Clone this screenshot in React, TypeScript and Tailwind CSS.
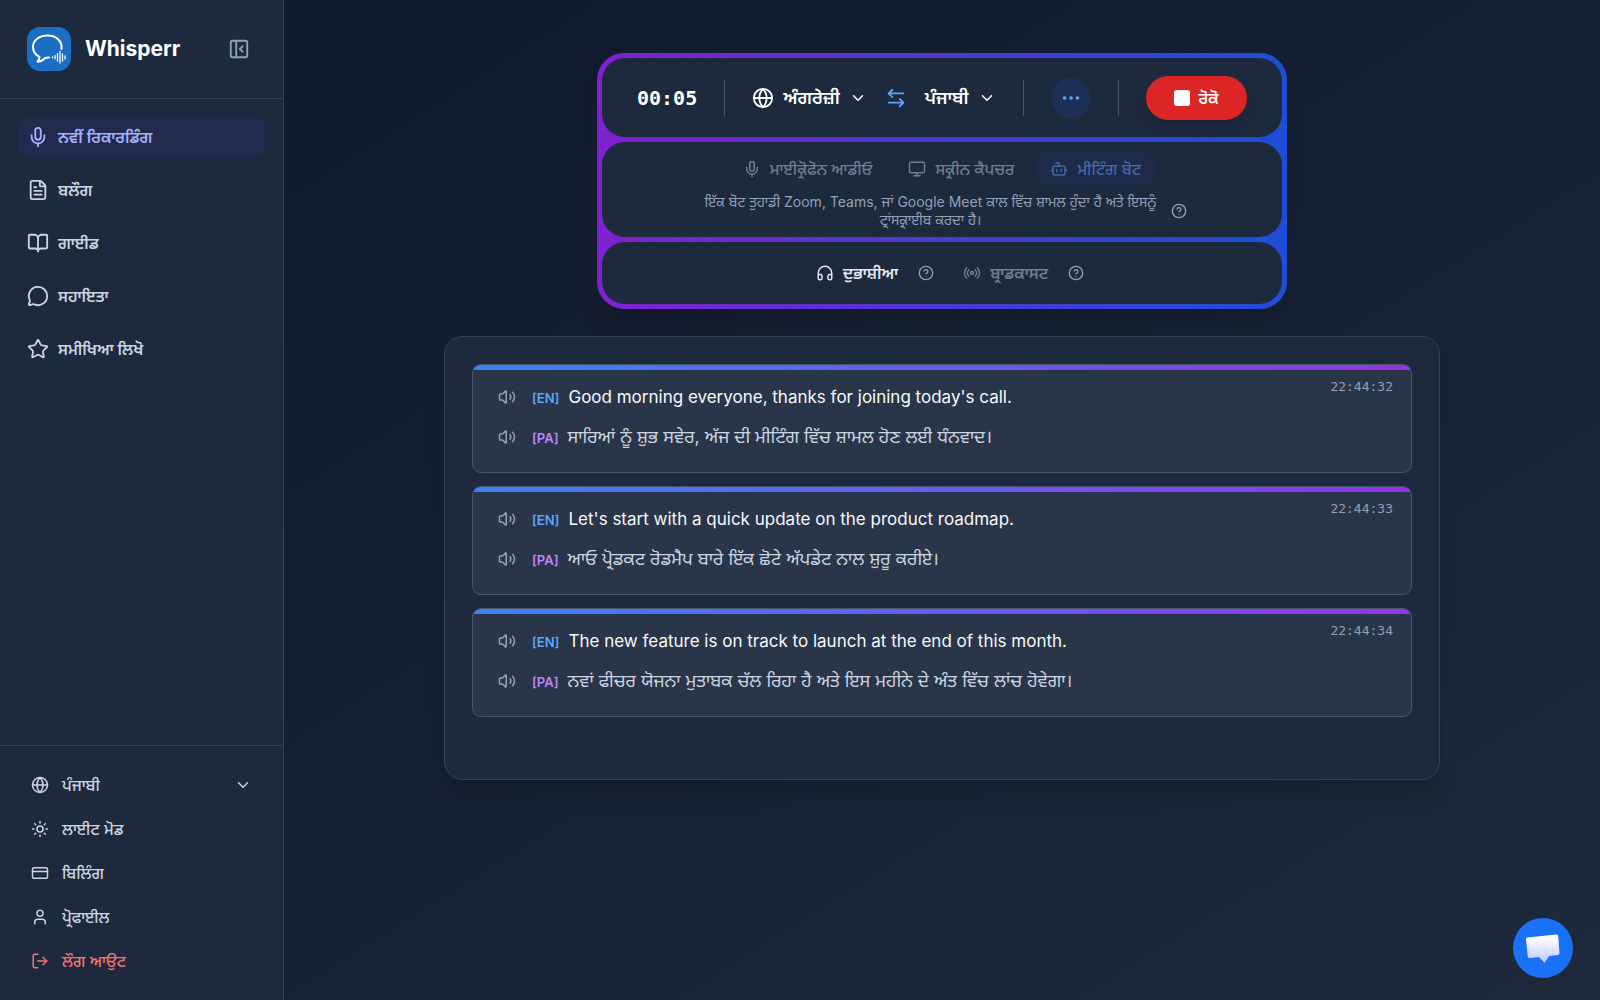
import React from "react";
import {
  Mic, FileText, BookOpen, MessageCircle, Star, Globe, Sun, CreditCard, User, LogOut,
  ChevronDown, PanelLeftClose, Monitor, Bot, CircleHelp, Headphones, Radio, Volume2,
  Ellipsis, ArrowLeftRight,
} from "lucide-react";

const nav = [
  { icon: Mic, label: "ਨਵੀਂ ਰਿਕਾਰਡਿੰਗ", active: true },
  { icon: FileText, label: "ਬਲੌਗ" },
  { icon: BookOpen, label: "ਗਾਈਡ" },
  { icon: MessageCircle, label: "ਸਹਾਇਤਾ" },
  { icon: Star, label: "ਸਮੀਖਿਆ ਲਿਖੋ" },
];

const messages = [
  { time: "22:44:32", en: "Good morning everyone, thanks for joining today's call.", pa: "ਸਾਰਿਆਂ ਨੂੰ ਸ਼ੁਭ ਸਵੇਰ, ਅੱਜ ਦੀ ਮੀਟਿੰਗ ਵਿੱਚ ਸ਼ਾਮਲ ਹੋਣ ਲਈ ਧੰਨਵਾਦ।" },
  { time: "22:44:33", en: "Let's start with a quick update on the product roadmap.", pa: "ਆਓ ਪ੍ਰੋਡਕਟ ਰੋਡਮੈਪ ਬਾਰੇ ਇੱਕ ਛੋਟੇ ਅੱਪਡੇਟ ਨਾਲ ਸ਼ੁਰੂ ਕਰੀਏ।" },
  { time: "22:44:34", en: "The new feature is on track to launch at the end of this month.", pa: "ਨਵਾਂ ਫੀਚਰ ਯੋਜਨਾ ਮੁਤਾਬਕ ਚੱਲ ਰਿਹਾ ਹੈ ਅਤੇ ਇਸ ਮਹੀਨੇ ਦੇ ਅੰਤ ਵਿੱਚ ਲਾਂਚ ਹੋਵੇਗਾ।" },
];

function Logo() {
  return (
    <svg viewBox="0 0 44 44" className="size-11" fill="none" stroke="white" strokeLinecap="round" aria-hidden="true">
      <rect width="44" height="44" rx="13" fill="#1a6fc4" stroke="none" />
      <path d="M34.500 22C35.500 14 29 8.500 20.500 8.500 12 8.500 6 13.500 6 20c0 4.500 2.500 8 6.500 9.800-.2 2-1 3.700-2 5 3-.3 5.500-1.500 7.500-3.600 1.200-.7 2.500-.7 4-.7" strokeWidth="2" strokeLinejoin="round" />
      <path d="M25.500 29.800v1M28 28.500v3.500M30.500 26.500v7.500M33 24.500v11.500M35.500 27v7M38 29v3" strokeWidth="1.300" />
    </svg>
  );
}

function Sidebar() {
  return (
    <aside className="flex w-[284px] shrink-0 flex-col border-r border-slate-700 bg-slate-800">
      <div className="flex items-center gap-[14px] border-b border-slate-700 px-[27px] py-[27px]">
        <Logo />
        <span className="text-[21px] leading-7 font-bold text-white">Whisperr</span>
        <button type="button" aria-label="Collapse sidebar" className="ml-auto p-[6px] text-slate-400">
          <PanelLeftClose size={22} />
        </button>
      </div>
      <nav className="flex flex-col gap-[13px] px-[18px] pt-[18px]">
        {nav.map(({ icon: Icon, label, active }) => (
          <a
            key={label}
            href="#"
            className={
              active
                ? "flex h-10 items-center gap-[9px] rounded-[9px] bg-[#232a4e] px-[9px] text-base font-semibold text-indigo-300"
                : "flex h-10 items-center gap-[9px] rounded-[9px] px-[9px] text-base font-semibold text-slate-300"
            }
          >
            <Icon size={22} />
            {label}
          </a>
        ))}
      </nav>
      <div className="mt-auto flex flex-col gap-2 border-t border-slate-700 px-[18px] pt-[21px] pb-[21px] text-base font-medium text-slate-300">
        <button type="button" className="flex h-9 items-center gap-[13px] px-[13px]">
          <Globe size={18} />
          ਪੰਜਾਬੀ
          <ChevronDown size={18} className="ml-auto" />
        </button>
        <button type="button" className="flex h-9 items-center gap-[13px] px-[13px]"><Sun size={18} />ਲਾਈਟ ਮੋਡ</button>
        <a href="#" className="flex h-9 items-center gap-[13px] px-[13px]"><CreditCard size={18} />ਬਿਲਿੰਗ</a>
        <a href="#" className="flex h-9 items-center gap-[13px] px-[13px]"><User size={18} />ਪ੍ਰੋਫਾਈਲ</a>
        <button type="button" className="flex h-9 items-center gap-[13px] px-[13px] text-[#f87171]"><LogOut size={18} />ਲੌਗ ਆਉਟ</button>
      </div>
    </aside>
  );
}

function Help() {
  return (
    <button type="button" aria-label="Help" className="text-slate-400">
      <CircleHelp size={16} />
    </button>
  );
}

function Toolbar() {
  return (
    <section className="flex w-full max-w-[690px] flex-col gap-[5px] rounded-[27px] bg-[linear-gradient(to_right,#7e22ce,#1d4ed8)] p-[5px] shadow-xl">
      <div className="flex h-[79px] items-center rounded-[23px] bg-slate-800 px-[35px]">
        <span className="font-['DejaVu_Sans_Mono',monospace] text-[20px] font-bold text-white">00:05</span>
        <div className="ml-[27px] h-9 w-px bg-slate-600" />
        <button type="button" className="ml-[27px] flex items-center gap-[9px] text-lg font-semibold text-white">
          <Globe size={22} />ਅੰਗਰੇਜ਼ੀ<ChevronDown size={18} />
        </button>
        <button type="button" aria-label="Swap languages" className="ml-[18px] text-[#60a5fa]"><ArrowLeftRight size={22} /></button>
        <button type="button" className="ml-[18px] flex items-center gap-[9px] text-lg font-semibold text-white">
          ਪੰਜਾਬੀ<ChevronDown size={18} />
        </button>
        <div className="ml-[27px] h-9 w-px bg-slate-600" />
        <button type="button" aria-label="More" className="ml-[27px] flex size-10 items-center justify-center rounded-full bg-[#1e2f57] text-[#60a5fa]"><Ellipsis size={22} /></button>
        <div className="ml-[27px] h-9 w-px bg-slate-600" />
        <button type="button" className="ml-[27px] flex h-[44px] items-center gap-[9px] rounded-full bg-[#dc2626] px-7 text-base font-semibold text-white shadow-lg">
          <span className="size-4 rounded-[3px] bg-white" />ਰੋਕੋ
        </button>
      </div>
      <div className="flex h-[95px] flex-col items-center rounded-[23px] bg-slate-800 pt-[9px]">
        <div className="flex h-9 items-center gap-1 text-base font-medium text-[#717c8e]">
          <button type="button" className="flex items-center gap-[9px] px-4"><Mic size={18} />ਮਾਈਕ੍ਰੋਫੋਨ ਆਡੀਓ</button>
          <button type="button" className="flex items-center gap-[9px] px-4"><Monitor size={18} />ਸਕ੍ਰੀਨ ਕੈਪਚਰ</button>
          <button type="button" className="flex h-9 items-center gap-[9px] rounded-full bg-[#1e2b48] px-4 text-[#4467a8]"><Bot size={18} />ਮੀਟਿੰਗ ਬੋਟ</button>
        </div>
        <div className="flex items-center gap-[7px] pt-[6px]">
          <p className="w-[466px] text-center text-sm leading-[18px] text-slate-400">
            ਇੱਕ ਬੋਟ ਤੁਹਾਡੀ Zoom, Teams, ਜਾਂ Google Meet ਕਾਲ ਵਿੱਚ ਸ਼ਾਮਲ ਹੁੰਦਾ ਹੈ ਅਤੇ ਇਸਨੂੰ ਟ੍ਰਾਂਸਕ੍ਰਾਈਬ ਕਰਦਾ ਹੈ।
          </p>
          <Help />
        </div>
      </div>
      <div className="flex h-[62px] items-center justify-center gap-[20px] rounded-[23px] bg-slate-800 text-base font-semibold">
        <button type="button" className="flex items-center gap-[9px] pl-4 text-slate-200"><Headphones size={18} />ਦੁਭਾਸ਼ੀਆ</button>
        <Help />
        <button type="button" className="ml-[9px] flex items-center gap-[9px] text-[#717c8e]"><Radio size={18} />ਬ੍ਰਾਡਕਾਸਟ</button>
        <Help />
      </div>
    </section>
  );
}

function Message({ time, en, pa }: { time: string; en: string; pa: string }) {
  return (
    <article className="relative overflow-hidden rounded-[9px] border border-slate-600 bg-[#293548]">
      <div className="h-[5px] bg-[linear-gradient(to_right,#3b82f6,#9333ea)]" />
      <time className="absolute top-[13px] right-[18px] font-['DejaVu_Sans_Mono',monospace] text-[13px] leading-[18px] text-slate-400">{time}</time>
      <div className="flex flex-col gap-3 px-[25px] pt-[13px] pb-[21px]">
        <div className="flex h-7 items-center gap-4">
          <button type="button" aria-label="Play English" className="text-slate-400"><Volume2 size={18} /></button>
          <p className="flex items-baseline gap-[9px] text-[17px] leading-7 text-slate-50">
            <span className="text-[13px] font-semibold text-[#60a5fa]">[EN]</span>
            <span>{en}</span>
          </p>
        </div>
        <div className="flex h-7 items-center gap-4">
          <button type="button" aria-label="Play Punjabi" className="text-slate-400"><Volume2 size={18} /></button>
          <p className="flex items-baseline gap-[9px] text-lg leading-7 text-slate-300">
            <span className="text-[13px] font-semibold text-[#c084fc]">[PA]</span>
            <span>{pa}</span>
          </p>
        </div>
      </div>
    </article>
  );
}

export default function App() {
  return (
    <div lang="pa" className="flex min-h-screen bg-[linear-gradient(to_bottom_right,#0f172a,#1e293b)] font-['Inter','Noto_Sans_Gurmukhi','Lohit_Gurmukhi',sans-serif]">
      <Sidebar />
      <main className="flex min-w-0 flex-1 flex-col items-center gap-[27px] px-9 pt-[53px]">
        <Toolbar />
        <section className="flex w-full max-w-[996px] flex-col gap-[13px] rounded-[18px] border border-slate-700 bg-slate-800 px-[27px] pt-[27px] pb-[62px] shadow-xl">
          {messages.map((m) => <Message key={m.time} {...m} />)}
        </section>
      </main>
      <button type="button" aria-label="Open chat" className="fixed right-[27px] bottom-[22px] flex size-[60px] items-center justify-center rounded-full bg-[#1972f5]">
        <svg viewBox="0 0 60 60" className="size-[60px]" aria-hidden="true">
          <defs>
            <linearGradient id="bubble" x1="0" y1="0" x2="0" y2="1">
              <stop offset="0.1" stopColor="#fff" />
              <stop offset="1" stopColor="#b9c9fb" />
            </linearGradient>
          </defs>
          <path d="M14.500 19.500 43 16.500q2-.2 2.200 1.700L46.500 35q.2 1.700-1.500 2L36 38l-4.500 7-5.500-6-9 1q-2 .2-2.200-1.600L13 21.500q-.2-1.800 1.500-2z" fill="url(#bubble)" />
        </svg>
      </button>
    </div>
  );
}
